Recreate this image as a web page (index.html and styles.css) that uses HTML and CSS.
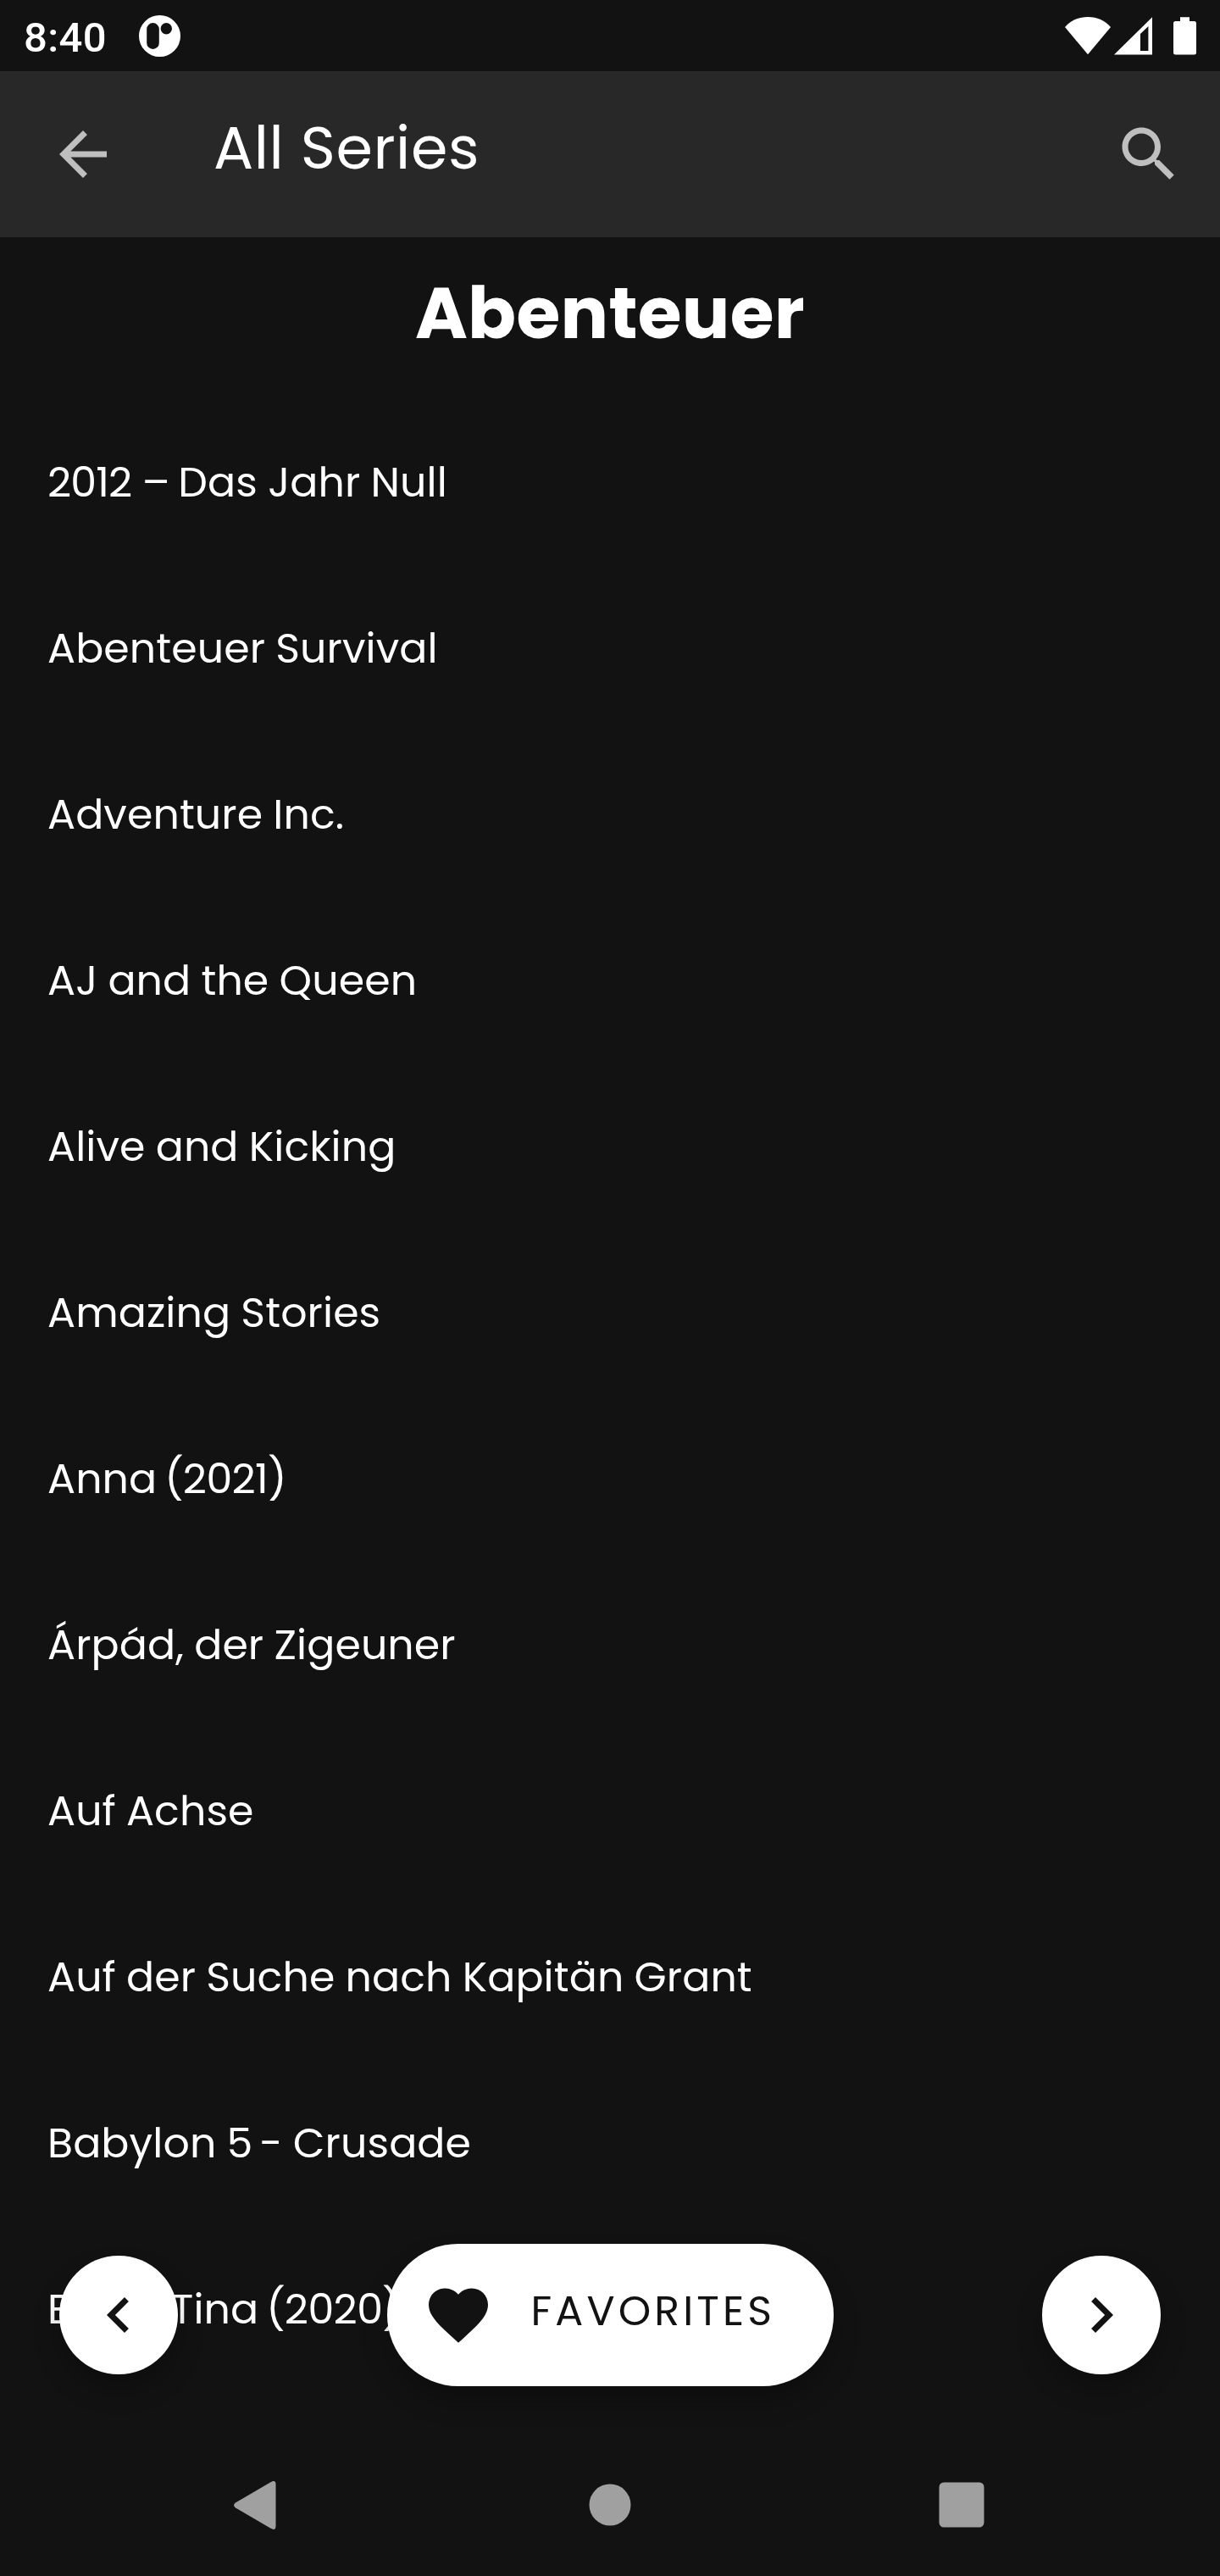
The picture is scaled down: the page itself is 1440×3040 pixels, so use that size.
FILE: index.html
```html
<!DOCTYPE html>
<html lang="de">
<head>
<meta charset="utf-8">
<title>All Series</title>
<link rel="stylesheet" href="styles.css">
</head>
<body>
<div class="screen">
  <header class="status-bar">
    <span class="clock">8:40</span>
    <svg class="app-badge" width="49" height="49" viewBox="0 0 49 49"><path fill="#fff" fill-rule="evenodd" d="M24.5 0a24.5 24.5 0 1 1 0 49a24.5 24.5 0 1 1 0-49zM16.5 9a7.3 7.3 0 0 0-7.3 7.3v16.400a7.300 7.300 0 0 0 14.600 0v-16.400a7.300 7.300 0 0 0-7.300-7.300zM32.300 9a6.700 6.700 0 1 0 0 13.400a6.700 6.700 0 1 0 0-13.400z"/></svg>
    <div class="status-icons">
      <svg width="54" height="46" viewBox="0 0 54 46"><path fill="#fff" d="M0 13C7 5 16 1 27 1s20 4 27 12L27 45.300z"/></svg>
      <svg class="signal" width="45" height="46" viewBox="0 0 45 46"><path fill="#fff" fill-rule="evenodd" d="M0 45.500L45 1.300v44.200zM31 21v20h9.400V12z"/></svg>
      <svg class="battery" width="27" height="46" viewBox="0 0 27 46"><path fill="#fff" d="M8 1.200h11V6h5.500A2.500 2.500 0 0 1 27 8.500V43a2.500 2.500 0 0 1-2.500 2.500h-22A2.500 2.500 0 0 1 0 43V8.500A2.500 2.500 0 0 1 2.500 6H8z"/></svg>
    </div>
  </header>

  <nav class="app-bar">
    <svg class="icon" viewBox="0 0 24 24"><path d="M20 11H7.830l5.590-5.590L12 4l-8 8 8 8 1.410-1.410L7.830 13H20v-2z"/></svg>
    <h1 class="title">All Series</h1>
    <svg class="icon" viewBox="0 0 24 24"><path d="M15.500 14h-.790l-.280-.270C15.410 12.590 16 11.110 16 9.500 16 5.910 13.090 3 9.500 3S3 5.910 3 9.500 5.910 16 9.500 16c1.610 0 3.090-.590 4.230-1.570l.270.280v.790l5 4.990L20.490 19l-4.990-5zm-6 0C7.010 14 5 11.990 5 9.500S7.010 5 9.500 5 14 7.010 14 9.500 11.990 14 9.500 14z"/></svg>
  </nav>

  <main class="content">
    <h2 class="genre">Abenteuer</h2>
    <ul class="series">
      <li><span class="num">2012</span> <span class="dash">–</span> Das Jahr Null</li>
      <li>Abenteuer Survival</li>
      <li>Adventure Inc.</li>
      <li>AJ and the Queen</li>
      <li>Alive and Kicking</li>
      <li>Amazing Stories</li>
      <li>Anna <span class="year">(2021)</span></li>
      <li>Árpád, der Zigeuner</li>
      <li>Auf Achse</li>
      <li>Auf der Suche nach Kapitän Grant</li>
      <li>Babylon <span class="digit">5</span> - Crusade</li>
      <li>Bibi <span class="dash">&amp;</span> Tina <span class="year">(2020)</span></li>
    </ul>
  </main>

  <div class="actions">
    <button class="fab" aria-label="Previous"><svg viewBox="0 0 24 24"><path d="M15.410 7.410L14 6l-6 6 6 6 1.410-1.410L10.830 12z"/></svg></button>
    <button class="fab favorites">
      <svg viewBox="0 0 24 24"><path d="M12 21.350l-1.450-1.320C5.400 15.360 2 12.280 2 8.500 2 5.420 4.420 3 7.500 3c1.740 0 3.410.810 4.500 2.090C13.090 3.810 14.760 3 16.500 3 19.580 3 22 5.420 22 8.500c0 3.780-3.400 6.860-8.550 11.540L12 21.350z"/></svg>
      <span>FAVORITES</span>
    </button>
    <button class="fab" aria-label="Next"><svg viewBox="0 0 24 24"><path d="M10 6L8.590 7.410 13.170 12l-4.580 4.590L10 18l6-6z"/></svg></button>
  </div>

  <footer class="system-nav">
    <svg width="50" height="57" viewBox="0 0 50 57"><path d="M43.500 1.200Q49.500-2 49.500 4v49q0 6-6 2.800L2 31.500q-4-3 0-6z"/></svg>
    <svg class="home" width="50" height="50" viewBox="0 0 50 50"><circle cx="25" cy="25" r="24.500"/></svg>
    <svg width="54" height="54" viewBox="0 0 54 54"><rect x=".5" y=".5" width="53" height="53" rx="5.500"/></svg>
  </footer>
</div>
</body>
</html>
```
FILE: styles.css
```css
* {
  box-sizing: border-box;
}

body {
  margin: 0;
  background: #121212;
  color: #fff;
  font-family: Poppins, Inter, sans-serif;
}

.screen {
  position: relative;
  display: flex;
  flex-direction: column;
  width: 1440px;
  height: 3040px;
  overflow: hidden;
}

.status-bar {
  display: flex;
  align-items: center;
  flex: none;
  height: 84px;
  padding: 0 28px;
}

.clock {
  width: 136px;
  padding-top: 4px;
  font: 500 49px/1 Roboto, sans-serif;
  letter-spacing: 0.4px;
}

.status-icons {
  display: flex;
  align-items: center;
  margin-left: auto;
}

.signal {
  margin-left: 4px;
}

.battery {
  margin-left: 25px;
}

.app-bar {
  display: flex;
  align-items: center;
  flex: none;
  height: 196px;
  padding: 0 42px 0 56px;
  background: #282828;
}

.icon {
  width: 84px;
  height: 84px;
  fill: #bfbfbf;
}

.title {
  flex: 1;
  margin: 0;
  padding: 0 0 15px 112px;
  font-size: 70px;
  font-weight: 400;
  line-height: 84px;
  letter-spacing: 0.6px;
}

.content {
  flex: 1;
  min-height: 0;
  overflow: hidden;
}

.genre {
  margin: 0 0 12px;
  font-size: 84px;
  font-weight: 700;
  line-height: 179px;
  letter-spacing: 0.3px;
  text-align: center;
}

.series {
  margin: 0;
  padding: 0 56px;
  list-style: none;
}

.series li {
  font-size: 49px;
  line-height: 196px;
  letter-spacing: 0.1px;
  word-spacing: -1px;
  white-space: nowrap;
}

.num {
  letter-spacing: -0.9px;
}

.dash {
  margin-right: -2.5px;
}

.digit {
  margin-right: -4.2px;
}

.year {
  margin-left: -3.3px;
  letter-spacing: -0.6px;
}

.actions {
  position: absolute;
  right: 70px;
  bottom: 224px;
  left: 70px;
  display: flex;
  align-items: center;
  justify-content: space-between;
}

.fab {
  display: flex;
  align-items: center;
  justify-content: center;
  width: 140px;
  height: 140px;
  padding: 0;
  border: 0;
  border-radius: 84px;
  background: #fff;
  color: #121212;
  box-shadow: 0 18px 30px rgba(0, 0, 0, 0.25);
}

.fab svg {
  width: 84px;
  height: 84px;
  fill: #121212;
}

.favorites {
  justify-content: flex-start;
  width: 527px;
  height: 168px;
  padding-left: 42px;
  font: 400 49px/70px Poppins, Inter, sans-serif;
  letter-spacing: 4.1px;
}

.favorites span {
  padding: 0 0 10px 44px;
}

.system-nav {
  display: flex;
  align-items: center;
  justify-content: space-between;
  flex: none;
  height: 168px;
  padding: 0 278px 0 276px;
  fill: #a0a0a0;
}

.home {
  margin-left: 6px;
}
```
